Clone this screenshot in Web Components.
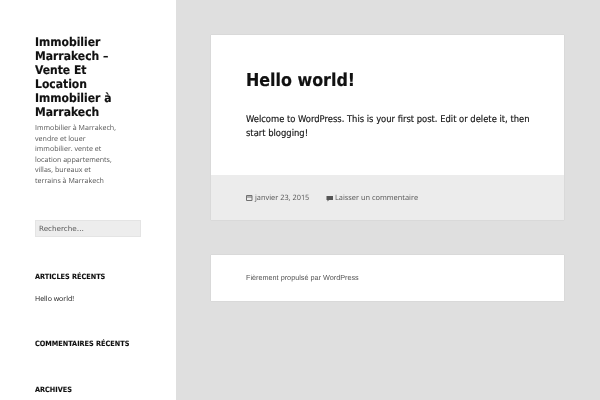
<!DOCTYPE html>
<html>
<head>
  <style>
    html, body { margin: 0; height: 400px; overflow: hidden; background: #dfdfdf; }
    body { display: flex; font-family: "DejaVu Sans", sans-serif; color: #333; text-rendering: geometricPrecision; }
  </style>
</head>
<body>
  <site-sidebar>
    <site-branding slot="top" name="Immobilier Marrakech – Vente Et Location Immobilier à Marrakech">Immobilier à Marrakech, vendre et louer immobilier. vente et location appartements, villas, bureaux et terrains à Marrakech</site-branding>
    <search-box></search-box>
    <side-widget title="Articles récents"><div>Hello world!</div></side-widget>
    <side-widget title="Commentaires récents"></side-widget>
    <side-widget title="Archives"></side-widget>
  </site-sidebar>
  <site-main>
    <post-card title="Hello world!" date="janvier 23, 2015" comment="Laisser un commentaire">Welcome to WordPress. This is your first post. Edit or delete it, then start blogging!</post-card>
    <site-footer>Fièrement propulsé par WordPress</site-footer>
  </site-main>

  <script>
    class SiteSidebar extends HTMLElement {
      constructor() {
        super();
        this.attachShadow({ mode: 'open' });
        this.shadowRoot.innerHTML = `
          <style>
            :host { display: block; flex: 0 0 176px; box-sizing: border-box; height: 400px; padding: 35px 35px 0; background: #fff; overflow: hidden; }
          </style>
          <slot name="top"></slot>
          <slot></slot>
        `;
      }
    }

    class SiteBranding extends HTMLElement {
      constructor() {
        super();
        this.attachShadow({ mode: 'open' });
      }

      connectedCallback() {
        this.shadowRoot.innerHTML = `
          <style>
            :host { display: block; }
            h1 { margin: 0 0 4px; font: bold 12px/14px "DejaVu Sans Condensed", "DejaVu Sans", sans-serif; color: #111; will-change: transform; -webkit-text-stroke: .15px #111; }
            p { margin: 0; width: 83px; font: 7.1px/10.5px "Open Sans", sans-serif; color: #555; will-change: transform; }
          </style>
          <h1>${this.getAttribute('name')}</h1>
          <p><slot></slot></p>
        `;
      }
    }

    class SearchBox extends HTMLElement {
      constructor() {
        super();
        this.attachShadow({ mode: 'open' });
        this.shadowRoot.innerHTML = `
          <style>
            :host { display: block; margin: 34px 0 -1px; width: 106px; }
            div { box-sizing: border-box; height: 17px; background: #ededed; border: 1px solid #e4e4e4; }
            span { display: block; padding: 0 3px; font: 7.2px/15px "DejaVu Sans", sans-serif; color: #555; will-change: transform; }
          </style>
          <div><span>Recherche…</span></div>
        `;
      }
    }

    class SideWidget extends HTMLElement {
      constructor() {
        super();
        this.attachShadow({ mode: 'open' });
      }

      connectedCallback() {
        this.shadowRoot.innerHTML = `
          <style>
            :host { display: block; margin-top: 35px; font: 7px/10px "Open Sans", sans-serif; color: #111; }
            h2 { margin: 0; font: bold 7.25px/11px "DejaVu Sans Condensed", "DejaVu Sans", sans-serif; text-transform: uppercase; color: #111; white-space: nowrap; will-change: transform; -webkit-text-stroke: .1px #111; }
            .body { margin: 13px 0 -2px; will-change: transform; }
          </style>
          <h2>${this.getAttribute('title')}</h2>
          ${this.children.length ? '<div class="body"><slot></slot></div>' : ''}
        `;
      }
    }

    class SiteMain extends HTMLElement {
      constructor() {
        super();
        this.attachShadow({ mode: 'open' });
        this.shadowRoot.innerHTML = `
          <style>
            :host { display: flex; flex-direction: column; gap: 35px; flex: 0 0 353px; margin-left: 35px; padding-top: 35px; }
          </style>
          <slot></slot>
        `;
      }
    }

    class PostCard extends HTMLElement {
      constructor() {
        super();
        this.attachShadow({ mode: 'open' });
      }

      connectedCallback() {
        this.shadowRoot.innerHTML = `
          <style>
            :host { display: block; background: #fff; box-shadow: 0 0 1px rgba(0,0,0,.15); }
            .body { padding: 36px 30px 34px 35px; }
            h2 { margin: 0 0 21px; font: bold 17.7px/21px "DejaVu Sans Condensed", "DejaVu Sans", sans-serif; color: #111; will-change: transform; -webkit-text-stroke: .2px #111; }
            p { margin: 0; font: 9.33px/14px "DejaVu Sans Condensed", "DejaVu Sans", sans-serif; color: #111; will-change: transform; -webkit-text-stroke: .15px #111; }
            footer { display: flex; gap: 17px; padding: 16px 35px 0; height: 29px; background: #ececec; font: 7.4px/14px "Open Sans", sans-serif; color: #555; }
            span { display: flex; align-items: center; gap: 2px; height: 14px; will-change: transform; }
            svg { display: block; width: 7px; height: 7px; }
          </style>
          <div class="body">
            <h2>${this.getAttribute('title')}</h2>
            <p><slot></slot></p>
          </div>
          <footer>
            <span><svg viewBox="0 0 7 7"><path fill="none" stroke="#707070" d="M.5 .5h5.500v5h-5.500zM.5 2h5.500"/></svg>${this.getAttribute('date')}</span>
            <span><svg viewBox="0 0 7 7"><path fill="#555" d="M.5 1h6.500v4H3L1.500 6.500V5H.5z"/></svg>${this.getAttribute('comment')}</span>
          </footer>
        `;
      }
    }

    class SiteFooter extends HTMLElement {
      constructor() {
        super();
        this.attachShadow({ mode: 'open' });
        this.shadowRoot.innerHTML = `
          <style>
            :host { display: block; padding: 17px 35px; height: 12px; background: #fff; box-shadow: 0 0 1px rgba(0,0,0,.15); font: 7.25px/12px "Liberation Sans", sans-serif; color: #555; }
            div { will-change: transform; }
          </style>
          <div><slot></slot></div>
        `;
      }
    }

    customElements.define('site-sidebar', SiteSidebar);
    customElements.define('site-branding', SiteBranding);
    customElements.define('search-box', SearchBox);
    customElements.define('side-widget', SideWidget);
    customElements.define('site-main', SiteMain);
    customElements.define('post-card', PostCard);
    customElements.define('site-footer', SiteFooter);
  </script>
</body>
</html>
